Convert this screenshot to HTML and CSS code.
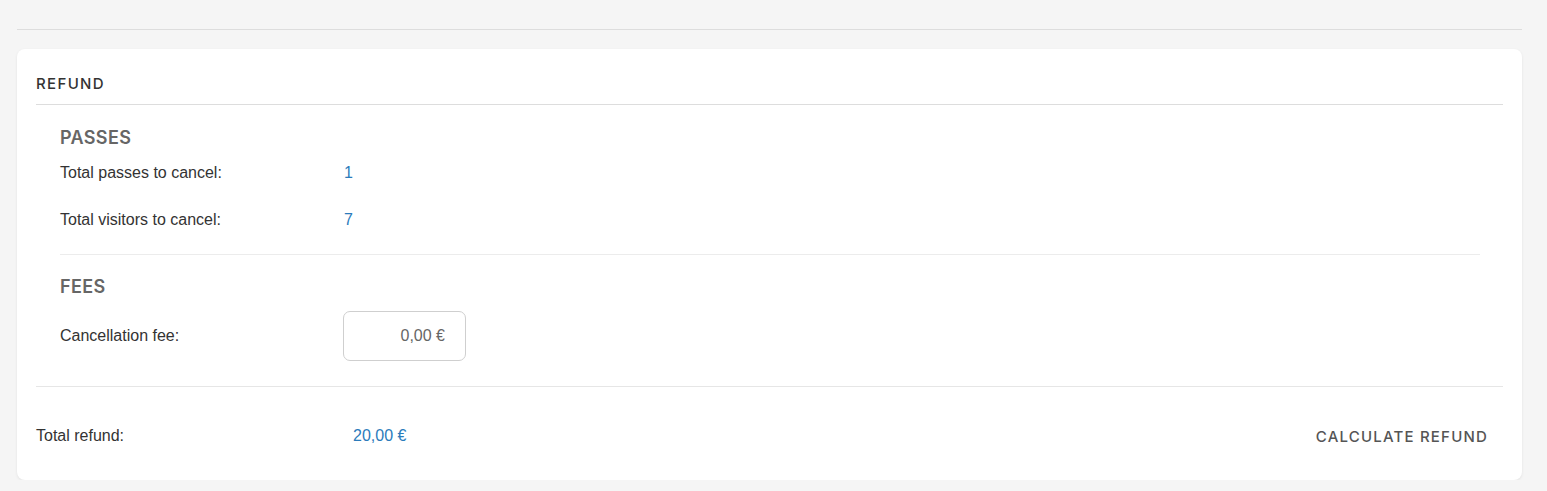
FILE: index.html
```html
<!DOCTYPE html>
<html lang="en">
<head>
<meta charset="utf-8">
<title>Refund</title>
<link rel="stylesheet" href="styles.css">
</head>
<body>
<div class="page">
  <div class="top-rule"></div>
  <section class="card">
    <header class="card-header">REFUND</header>
    <div class="group group--bordered">
      <h2 class="group-title">PASSES</h2>
      <div class="row">
        <span class="label">Total passes to cancel:</span>
        <span class="value">1</span>
      </div>
      <div class="row">
        <span class="label">Total visitors to cancel:</span>
        <span class="value">7</span>
      </div>
    </div>
    <div class="group group--fees">
      <h2 class="group-title">FEES</h2>
      <div class="row row--input">
        <span class="label">Cancellation fee:</span>
        <div class="money-input">0,00 €</div>
      </div>
    </div>
    <footer class="card-footer">
      <div class="total">
        <span class="total-label">Total refund:</span>
        <span class="value">20,00 €</span>
      </div>
      <button class="btn-text" type="button">CALCULATE REFUND</button>
    </footer>
  </section>
</div>
</body>
</html>
```

FILE: styles.css
```css
html, body {
  margin: 0;
  padding: 0;
  background: #f5f5f5;
}

body {
  font-family: "Liberation Sans", Arial, sans-serif;
  font-size: 16px;
  color: #333;
}

.page {
  padding: 29px 25px 0 17px;
}

.top-rule {
  border-top: 1px solid #dddddd;
}

.card {
  margin-top: 19px;
  background: #fff;
  border-radius: 8px;
  box-shadow: 0 1px 3px rgba(0, 0, 0, 0.08);
  padding: 0 19px;
}

.card-header {
  font-family: Inter, "Open Sans", sans-serif;
  font-weight: 500;
  font-size: 15px;
  letter-spacing: 0.09em;
  line-height: 20px;
  color: #333;
  padding: 25px 0 10px;
  border-bottom: 1px solid #dddddd;
}

.group {
  margin: 0 23px 0 24px;
  padding: 22px 0 11px;
}

.group--bordered {
  border-bottom: 1px solid #ececec;
}

.group--fees {
  padding: 21px 0 25px;
}

.group-title {
  margin: 0;
  font-family: Inter, "Open Sans", sans-serif;
  font-weight: 600;
  font-size: 18px;
  letter-spacing: 0.02em;
  line-height: 22px;
  color: #666;
}

.row {
  display: flex;
  align-items: center;
  height: 47px;
}

.row--input {
  height: 50px;
  margin-top: 13px;
}

.label {
  width: 284px;
  flex: none;
}

.value {
  color: #2b7bbb;
}

.money-input {
  box-sizing: border-box;
  width: 123px;
  height: 50px;
  border: 1px solid #cfcfcf;
  border-radius: 7px;
  padding: 0 20px;
  display: flex;
  align-items: center;
  justify-content: flex-end;
  color: #666;
  margin-left: -1px;
}

.card-footer {
  border-top: 1px solid #e6e6e6;
  height: 94px;
  box-sizing: border-box;
  padding-top: 5px;
  display: flex;
  align-items: center;
  justify-content: space-between;
}

.total {
  display: flex;
  align-items: center;
}

.total-label {
  width: 317px;
  flex: none;
}

.btn-text {
  background: none;
  border: 0;
  padding: 8px 15px;
  font-family: Inter, "Open Sans", sans-serif;
  font-weight: 500;
  font-size: 15px;
  letter-spacing: 0.08em;
  color: #555;
  cursor: pointer;
}
```
